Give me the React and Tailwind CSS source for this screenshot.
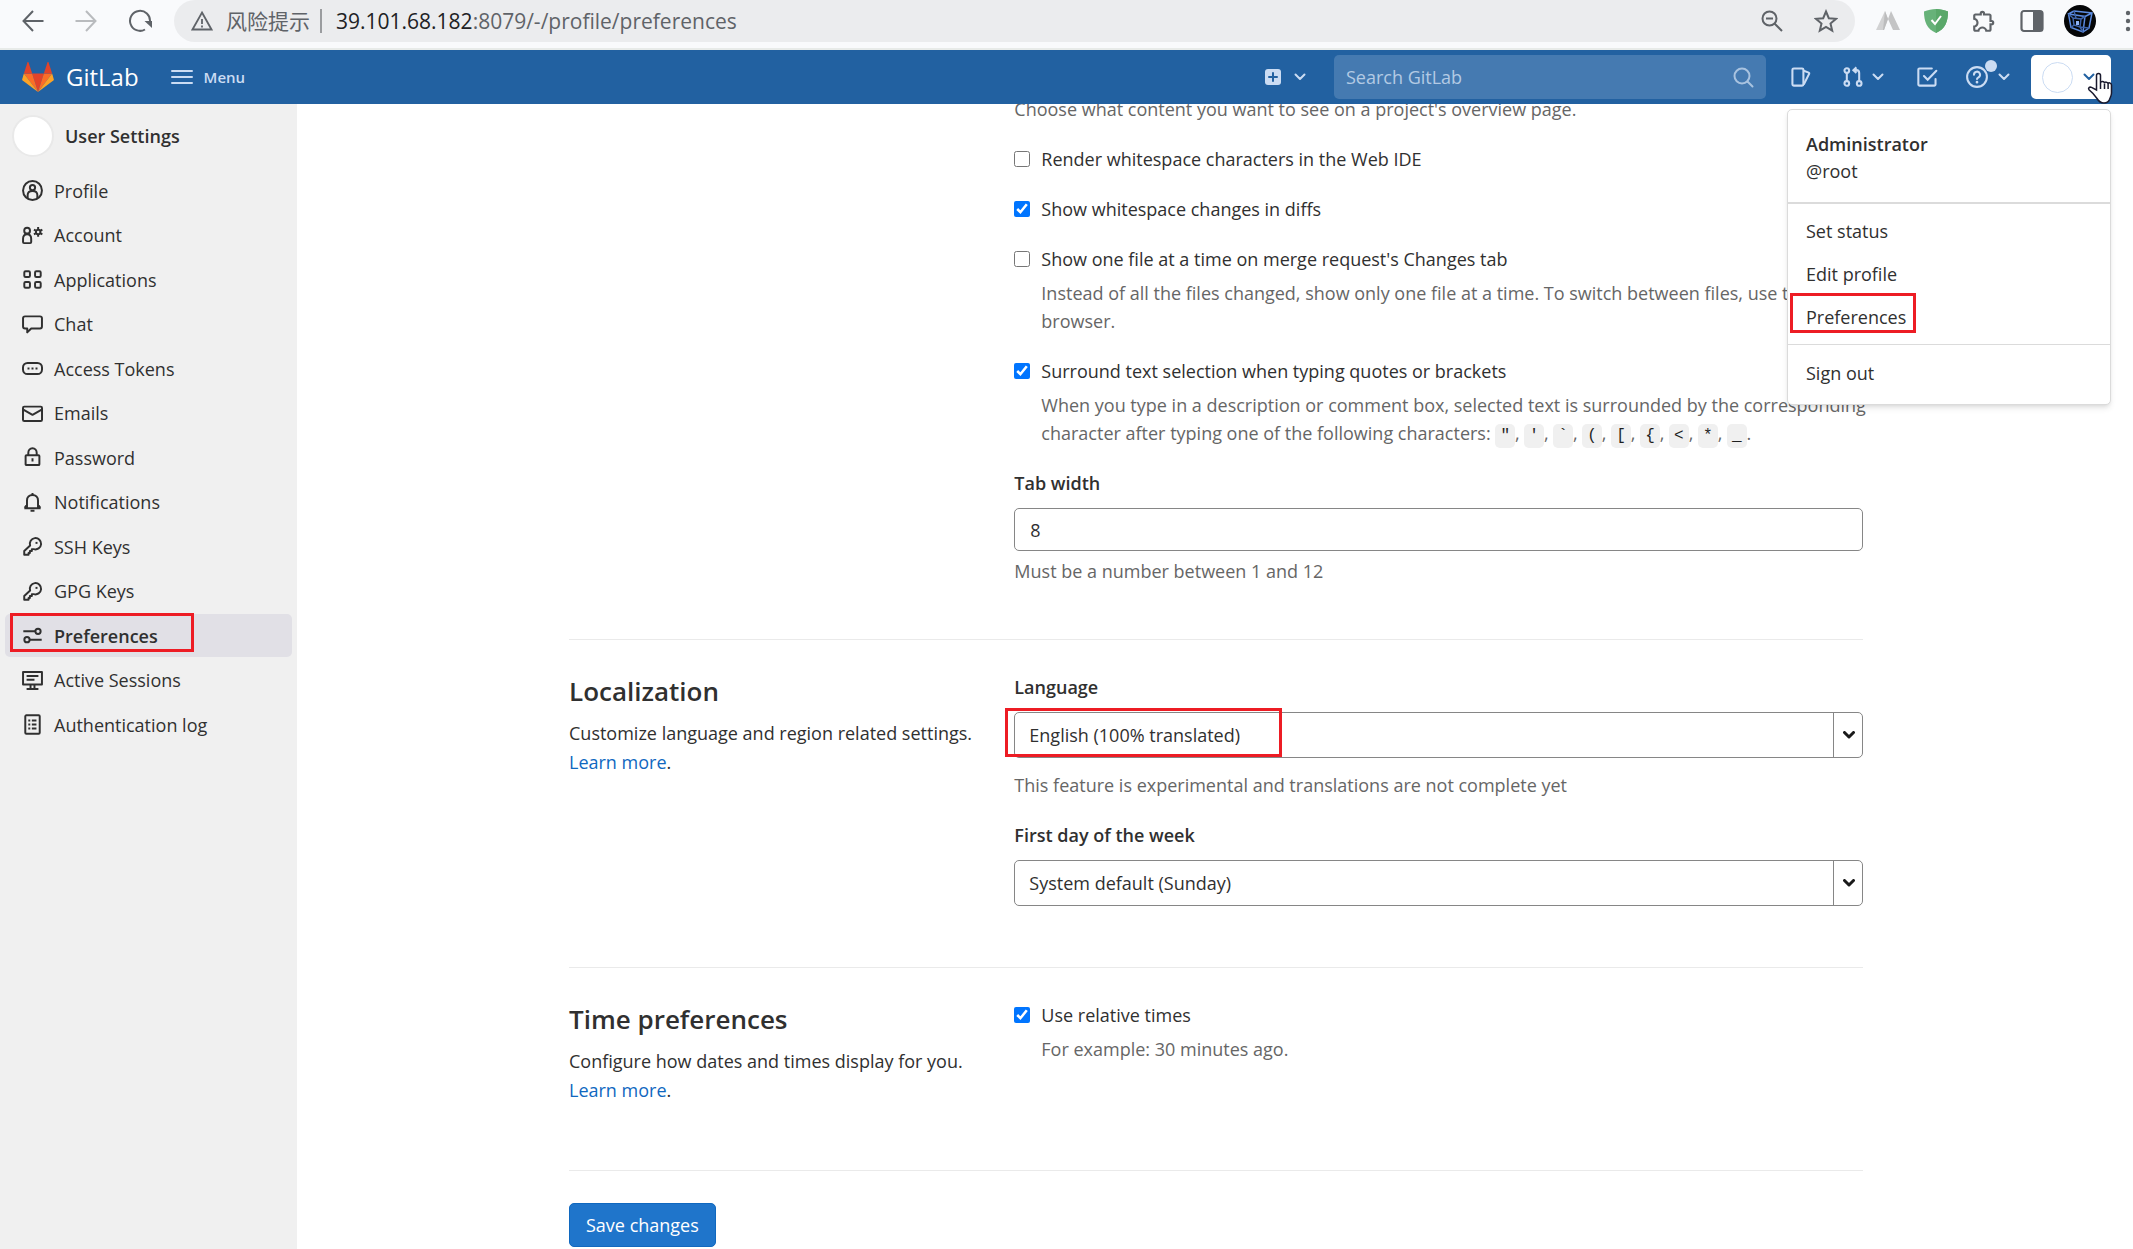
import { useState } from 'react';
import { MdOutlineExtension } from 'react-icons/md';

const SIDEBAR_ITEMS = [
  { icon: 'profile', label: 'Profile' },
  { icon: 'account', label: 'Account' },
  { icon: 'applications', label: 'Applications' },
  { icon: 'comment', label: 'Chat' },
  { icon: 'token', label: 'Access Tokens' },
  { icon: 'mail', label: 'Emails' },
  { icon: 'lock', label: 'Password' },
  { icon: 'bell', label: 'Notifications' },
  { icon: 'key', label: 'SSH Keys' },
  { icon: 'key', label: 'GPG Keys' },
  { icon: 'preferences', label: 'Preferences', active: true },
  { icon: 'monitor', label: 'Active Sessions' },
  { icon: 'log', label: 'Authentication log' },
];

const SURROUND_CHARS = ['"', "'", '`', '(', '[', '{', '<', '*', '_'];

export default function App() {
  return (
    <div className="min-h-screen flex flex-col overflow-hidden bg-white text-[18px] leading-7 text-[#303030] font-['Open_Sans','Noto_Sans_CJK_SC',sans-serif]">
      <BrowserBar />
      <Navbar />
      <div className="flex flex-1">
        <Sidebar />
        <Preferences />
      </div>
    </div>
  );
}

function BrowserBar() {
  return (
    <div className="h-[50px] flex items-start bg-[#f9fafc] border-b-2 border-[#e8ebe9] text-[#5f6368] pl-[22px] pr-0.5">
      <div className="h-[42px] flex items-center gap-[31px] pr-[22px] shrink-0">
        <button aria-label="Back">
          <svg className="size-[22px]" viewBox="0 0 22 22" fill="none" stroke="currentColor" strokeWidth="2">
            <path d="M21.500 11H1.500M11 1L1.500 11l9.500 10" />
          </svg>
        </button>
        <button aria-label="Forward" className="text-[#b9bbbe]">
          <svg className="size-[22px]" viewBox="0 0 22 22" fill="none" stroke="currentColor" strokeWidth="2">
            <path d="M0.500 11h20M11 1l9.500 10L11 21" />
          </svg>
        </button>
        <button aria-label="Reload">
          <svg className="size-6" viewBox="0 0 24 24" fill="none" stroke="currentColor" strokeWidth="2">
            <path d="M17 20.500A10 10 0 1 1 22 12.500" />
            <path d="M16.500 12H24v7z" fill="currentColor" stroke="none" />
          </svg>
        </button>
      </div>
      <div className="h-[42px] flex-1 flex items-center rounded-full bg-[#ebecee] pl-[17px] pr-[17px]">
        <svg className="size-[22px]" viewBox="0 0 22 22" fill="none" stroke="currentColor" strokeWidth="1.8">
          <path d="M11 2.500L20.500 19.500h-19z M11 9v5M11 15.500v2" />
        </svg>
        <span className="ml-[13px] text-[21px]">风险提示</span>
        <span className="w-0.5 h-6 ml-2.5 mr-3.5 bg-[#9a9c9f]" />
        <span className="flex-1 text-[21px]">
          <span className="text-[#202124]">39.101.68.182</span>:8079/-/profile/preferences
        </span>
        <div className="flex items-center gap-[31px]">
          <button aria-label="Zoom">
            <svg className="size-[22px]" viewBox="0 0 22 22" fill="none" stroke="currentColor" strokeWidth="2">
              <circle cx="8.500" cy="8.500" r="7" />
              <path d="M13.500 13.500l7.500 7.500M5 8.500h7" />
            </svg>
          </button>
          <button aria-label="Bookmark this page">
            <svg className="size-6" viewBox="0 0 24 24" fill="none" stroke="currentColor" strokeWidth="2">
              <path d="M12 2.500l2.800 6.700 7.200.6-5.500 4.700 1.700 7.100L12 17.800l-6.200 3.800 1.700-7.100L2 9.800l7.200-.6z" />
            </svg>
          </button>
        </div>
      </div>
      <div className="h-[42px] flex items-center gap-6 pl-[21px] shrink-0">
        <svg className="size-6" viewBox="0 0 24 24">
          <path d="M0 21L9 2l3 8-4 11z" fill="#d2d2d3" />
          <path d="M12 10l3-8 9 19h-7z" fill="#c4c4c5" />
          <path d="M9 2l3 8-4 11h-1z" fill="#bcbcbd" />
        </svg>
        <svg className="size-6" viewBox="0 0 24 24">
          <path d="M12 0c4 .2 8 1 12 2.500C24 13 21 20 12 24 3 20 0 13 0 2.500 4 1 8 .2 12 0z" fill="#67b279" />
          <path d="M12 0c4 .2 8 1 12 2.500C24 13 21 20 12 24z" fill="#5aa86a" />
          <path d="M7.500 11l3.500 4 6-8" fill="none" stroke="#fff" strokeWidth="2" />
        </svg>
        <MdOutlineExtension className="size-[26px] -mx-px" />
        <svg className="size-6" viewBox="0 0 24 24">
          <rect x="1.500" y="2" width="21" height="20" rx="2.500" fill="none" stroke="currentColor" strokeWidth="2.200" />
          <path d="M13 2h8a2 2 0 0 1 2 2v16a2 2 0 0 1-2 2h-8z" fill="currentColor" />
        </svg>
        <svg className="size-8 -mx-1" viewBox="0 0 32 32">
          <circle cx="16" cy="16" r="16" fill="#050608" />
          <g fill="none" stroke="#5b8be0" strokeWidth="1.500">
            <path d="M4.500 9L21 11.500 19 27 7 22.500zM10 6l18 2-3 15-6 4M4.500 9L10 6M21 11.500L28 8" />
            <path d="M9 13l8 1-1 8-6-2zM4.500 9L9 13M21 11.500L17 14M19 27l-3-5M7 22.500l3-2.500M10 6l2 7M25 23l-9-1" stroke="#3d62a8" />
          </g>
          <path d="M12 16h3v4h-3z" fill="#8db2f5" />
        </svg>
        <svg className="w-1.5 h-6 ml-[9px]" viewBox="0 0 6 24" fill="currentColor">
          <circle cx="3" cy="4" r="2.200" />
          <circle cx="3" cy="12" r="2.200" />
          <circle cx="3" cy="20" r="2.200" />
        </svg>
      </div>
    </div>
  );
}

function Navbar() {
  return (
    <header className="relative z-10 h-[54px] flex items-center bg-[#2261a1] text-[#cbdcf3] pl-[22px] pr-[22px]">
      <a href="#" className="flex items-center gap-3 text-white">
        <TanukiLogo />
        <span className="text-[24px]">GitLab</span>
      </a>
      <button className="flex items-center gap-[11px] ml-8 text-[15px] font-semibold">
        <svg className="w-[22px] h-4" viewBox="0 0 22 16" fill="none" stroke="currentColor" strokeWidth="2" strokeLinecap="round">
          <path d="M1 2h20M1 8h20M1 14h20" />
        </svg>
        Menu
      </button>
      <div className="flex-1" />
      <button aria-label="Create new" className="flex items-center gap-3 mr-7">
        <svg className="size-[18px]" viewBox="0 0 18 18">
          <rect x="1" y="1" width="16" height="16" rx="3" fill="currentColor" />
          <path d="M9 5v8M5 9h8" stroke="#2261a1" strokeWidth="2" strokeLinecap="round" />
        </svg>
        <Chevron />
      </button>
      <div className="w-[432px] h-11 flex items-center rounded-[5px] bg-[#457ab1] pl-3 pr-3">
        <input
          type="text"
          placeholder="Search GitLab"
          aria-label="Search GitLab"
          className="flex-1 bg-transparent outline-none text-white placeholder:text-[#b3cae4]"
        />
        <svg className="size-[21px] text-[#a9c3e0]" viewBox="0 0 21 21" fill="none" stroke="currentColor" strokeWidth="2" strokeLinecap="round">
          <circle cx="9" cy="9" r="7.500" />
          <path d="M14.500 14.500l5 5" />
        </svg>
      </div>
      <button aria-label="Issues" className="ml-6">
        <svg className="size-[22px]" viewBox="0 0 16 16" fill="none" stroke="currentColor" strokeWidth="1.500" strokeLinejoin="round">
          <rect x="1.750" y="1.750" width="8" height="12.500" rx="1" />
          <path d="M10 3.500l3.600 1.300a.6.6 0 0 1 .3.900L10 13.500" />
        </svg>
      </button>
      <button aria-label="Merge requests" className="flex items-center gap-2 ml-[30px]">
        <svg className="size-[22px]" viewBox="0 0 16 16" fill="none" stroke="currentColor" strokeWidth="1.500">
          <circle cx="3.500" cy="3.300" r="1.700" />
          <circle cx="3.500" cy="12.700" r="1.700" />
          <circle cx="12.500" cy="12.700" r="1.700" />
          <path d="M3.500 5v6M12.500 11V5a2 2 0 0 0-2-2H8.500M10.500 1L8.300 3l2.200 2" />
        </svg>
        <Chevron />
      </button>
      <button aria-label="To-Do List" className="ml-8">
        <svg className="size-[22px]" viewBox="0 0 16 16" fill="none" stroke="currentColor" strokeWidth="1.500" strokeLinecap="round">
          <path d="M11.500 1.750h-9a.8.800 0 0 0-.8.800v10.900a.8.800 0 0 0 .8.800h10.900a.8.800 0 0 0 .8-.800V9.500M5.800 7.300l2.700 2.700 6.300-6.500" />
        </svg>
      </button>
      <button aria-label="Help" className="relative flex items-center gap-2.5 ml-7">
        <svg className="size-[22px]" viewBox="0 0 16 16" fill="none" stroke="currentColor" strokeWidth="1.500" strokeLinecap="round">
          <circle cx="8" cy="8" r="7.200" />
          <path d="M5.800 6.300a2.200 2.200 0 1 1 3.300 1.900c-.7.400-1.100.7-1.100 1.300" />
          <circle cx="8" cy="11.800" r=".5" fill="currentColor" strokeWidth="1" />
        </svg>
        <span className="absolute -top-1.5 left-[19px] size-3 rounded-full bg-[#cbdcf3]" />
        <Chevron />
      </button>
      <div className="relative ml-[21px]">
        <button aria-label="User menu" className="h-11 w-20 flex items-center gap-2.5 rounded-[5px] bg-white pl-[11px] text-[#2261a1]">
          <span className="size-[31px] rounded-full border border-[#cbdcf3] bg-white" />
          <Chevron />
        </button>
        <HandCursor />
        <UserMenu />
      </div>
    </header>
  );
}

function UserMenu() {
  return (
    <div className="absolute right-0 top-[54px] w-[324px] bg-white border border-[#dbdbdb] rounded-[5px] shadow-md text-[#303030] pt-[21px] pb-[10px]">
      <div className="px-[18px] leading-[27px]">
        <div className="font-semibold">Administrator</div>
        <div>@root</div>
      </div>
      <hr className="mt-[17px] mb-[5px] border-t-2 border-[#dbdbdb]" />
      <MenuLink label="Set status" />
      <MenuLink label="Edit profile" />
      <MenuLink label="Preferences" marked />
      <hr className="my-[6px] border-[#dbdbdb]" />
      <MenuLink label="Sign out" />
    </div>
  );
}

function MenuLink({ label, marked }) {
  return (
    <a href="#" className="relative h-[43px] flex items-center px-[18px]">
      {label}
      {marked && <span className="absolute left-0.5 -top-0.5 w-[126px] h-10 border-3 border-[#ed1c24]" />}
    </a>
  );
}

function Sidebar() {
  return (
    <aside className="w-[297px] shrink-0 bg-[#f0f0f0] pt-[11px]">
      <div className="flex items-center gap-[11px] pl-3">
        <span className="size-[42px] rounded-full bg-white border-2 border-[#e9e9e9]" />
        <span className="font-semibold">User Settings</span>
      </div>
      <ul className="mt-3 px-[5px] h-[577px] flex flex-col justify-between">
        {SIDEBAR_ITEMS.map((item) => (
          <li key={item.label} className="relative">
            <a
              href="#"
              className={`h-[43px] flex items-center gap-[11px] pl-[17px] rounded-[5px] ${
                item.active ? 'bg-[#e1e0e6] font-semibold' : ''
              }`}
            >
              <SidebarIcon name={item.icon} />
              {item.label}
            </a>
            {item.active && (
              <span className="absolute left-[5px] -top-px w-[184px] h-[39px] border-3 border-[#ed1c24]" />
            )}
          </li>
        ))}
      </ul>
    </aside>
  );
}

function Preferences() {
  return (
    <main className="flex-1 -mt-[9px] pl-[42px] pr-10">
      <form className="max-w-[1294px] mx-auto" onSubmit={(e) => e.preventDefault()}>
        <div className="grid grid-cols-3 gap-[42px] pb-[54px]">
          <div />
          <div className="col-span-2 flex flex-col gap-[22px]">
            <p className="text-[#666]">Choose what content you want to see on a project's overview page.</p>
            <Checkbox id="whitespace-ide" label="Render whitespace characters in the Web IDE" />
            <Checkbox id="whitespace-diffs" label="Show whitespace changes in diffs" checked />
            <Checkbox id="one-file" label="Show one file at a time on merge request's Changes tab">
              Instead of all the files changed, show only one file at a time. To switch between files, use the file
              <br />
              browser.
            </Checkbox>
            <Checkbox id="surround" label="Surround text selection when typing quotes or brackets" checked>
              When you type in a description or comment box, selected text is surrounded by the corresponding
              <br />
              character after typing one of the following characters:{' '}
              {SURROUND_CHARS.map((char, i) => (
                <span key={char}>
                  <code className="px-[5px] py-[3px] rounded-[5px] bg-[#f0f0f0] text-[16px] leading-none text-[#1f1f1f] font-['Liberation_Mono',monospace]">
                    {char}
                  </code>
                  {i < SURROUND_CHARS.length - 1 ? ', ' : '.'}
                </span>
              ))}
            </Checkbox>
            <div>
              <label htmlFor="tab-width" className="block mb-[11px] font-semibold">Tab width</label>
              <input
                id="tab-width"
                type="text"
                defaultValue="8"
                className="block w-full h-[43px] px-[15px] rounded-[5px] border border-[#868686] bg-white"
              />
              <p className="mt-1.5 text-[#666]">Must be a number between 1 and 12</p>
            </div>
          </div>
        </div>

        <Section title="Localization" desc="Customize language and region related settings.">
          <div className="flex flex-col gap-[22px]">
            <div>
              <Select id="language" label="Language" value="English (100% translated)" marked />
              <p className="mt-[13px] text-[#666]">This feature is experimental and translations are not complete yet</p>
            </div>
            <Select id="first-day" label="First day of the week" value="System default (Sunday)" />
          </div>
        </Section>

        <Section title="Time preferences" desc="Configure how dates and times display for you.">
          <Checkbox id="relative-times" label="Use relative times" checked>
            For example: 30 minutes ago.
          </Checkbox>
        </Section>

        <div className="border-t border-[#eaeaea] pt-8 pb-0.5">
          <button className="h-11 px-4 rounded-[5px] bg-[#1f75cb] border border-[#1068bf] text-white">Save changes</button>
        </div>
      </form>
    </main>
  );
}

function Section({ title, desc, children }) {
  return (
    <section className="grid grid-cols-3 gap-[42px] border-t border-[#eaeaea] pt-[33px] pb-[61px]">
      <div className="pt-0.5 pb-1">
        <h4 className="mb-3 text-[26px] leading-8 font-semibold">{title}</h4>
        <p className="leading-[29px] whitespace-nowrap">
          {desc}
          <br />
          <a href="#" className="text-[#1068bf]">Learn more</a>.
        </p>
      </div>
      <div className="col-span-2">{children}</div>
    </section>
  );
}

function Checkbox({ id, label, checked = false, children }) {
  const [on, setOn] = useState(checked);

  return (
    <div className="flex gap-[11px]">
      <input
        id={id}
        type="checkbox"
        checked={on}
        onChange={() => setOn(!on)}
        className="size-4 mt-1.5 shrink-0"
      />
      <div className="min-w-0">
        <label htmlFor={id} className="block">{label}</label>
        {children && <p className="mt-1.5 text-[#666] whitespace-nowrap">{children}</p>}
      </div>
    </div>
  );
}

function Select({ id, label, value, marked }) {
  return (
    <div>
      <label htmlFor={id} className="block mb-[11px] font-semibold">{label}</label>
      <div className="relative">
        <select
          id={id}
          className="block w-full h-[46px] pl-[14px] rounded-[5px] border border-[#868686] bg-white appearance-none"
        >
          <option>{value}</option>
        </select>
        <span className="absolute right-0 inset-y-0 w-[30px] flex items-center justify-center border-l border-[#868686] pointer-events-none">
          <svg className="w-3 h-2" viewBox="0 0 12 8" fill="none" stroke="#1a1a1a" strokeWidth="3" strokeLinecap="round" strokeLinejoin="round">
            <path d="M1.500 1.500L6 6l4.500-4.500" />
          </svg>
        </span>
        {marked && (
          <span className="absolute -left-[9px] -top-1 w-[277px] h-[49px] border-3 border-[#ed1c24] pointer-events-none" />
        )}
      </div>
    </div>
  );
}

function Chevron() {
  return (
    <svg className="w-3 h-2 shrink-0" viewBox="0 0 12 8" fill="none" stroke="currentColor" strokeWidth="2" strokeLinecap="round" strokeLinejoin="round">
      <path d="M1.500 1.500L6 6l4.500-4.500" />
    </svg>
  );
}

function TanukiLogo() {
  return (
    <svg className="w-8 h-[30px]" viewBox="0 0 36 34">
      <path d="M18 34L24.600 13.100H11.400z" fill="#e24329" />
      <path d="M18 34L11.400 13.100H2z" fill="#fc6d26" />
      <path d="M2 13.100L.1 19.500a1.400 1.400 0 0 0 .5 1.500L18 34z" fill="#fca326" />
      <path d="M2 13.100h9.400L7.300.500c-.2-.6-1.100-.6-1.300 0z" fill="#e24329" />
      <path d="M18 34l6.600-20.900H34z" fill="#fc6d26" />
      <path d="M34 13.100l1.900 6.400a1.400 1.400 0 0 1-.5 1.500L18 34z" fill="#fca326" />
      <path d="M34 13.100h-9.400L28.700.500c.2-.6 1.100-.6 1.300 0z" fill="#e24329" />
    </svg>
  );
}

function HandCursor() {
  return (
    <svg className="absolute z-10 -right-0.5 top-[17px] w-[26px] h-8 pointer-events-none" viewBox="0 0 26 32">
      <path
        d="M9.500 18V3.500a2 2 0 0 1 4 0V11c0-2 4-1.800 4 .300 0-1.800 3.600-1.500 3.600.6 0-1.700 3.400-1.300 3.400 1V21c0 3-1.500 4.500-2 6.500-1 2.500-3 3.500-5.500 3.500-4 0-5.500-2-7-4.500L6 21.500l-4-3.800c-1.200-1.500.5-3.200 2.500-2.300z"
        fill="#fff"
        stroke="#1a1a2e"
        strokeWidth="1.500"
      />
      <path d="M13.500 11v6M17.500 11.500V17M21.100 12v5" stroke="#1a1a2e" strokeWidth="1.500" />
    </svg>
  );
}

function SidebarIcon({ name }) {
  return (
    <svg
      className="size-[21px] shrink-0"
      viewBox="0 0 16 16"
      fill="none"
      stroke="currentColor"
      strokeWidth="1.500"
      strokeLinejoin="round"
    >
      {name === 'profile' && (
        <>
          <circle cx="8" cy="8" r="7.200" />
          <circle cx="8" cy="5.800" r="2" />
          <path d="M4.300 13.800v-2.300c0-2 1.500-3.200 3.700-3.200s3.700 1.200 3.700 3.200v2.300" />
        </>
      )}
      {name === 'account' && (
        <>
          <circle cx="3.900" cy="4.300" r="2.200" />
          <path d="M.8 13v-2.500C.8 8.300 2 7 3.900 7S7 8.300 7 10.500V13c0 .5-.3.800-.8.800H1.600c-.5 0-.8-.3-.8-.800z" />
          <circle cx="12.300" cy="5.300" r="1.700" />
          <path d="M12.300 1.600v1.600M12.300 7.400V9M9.100 3.500l1.400.8M14.100 6.300l1.400.8M9.100 7.100l1.400-.8M14.100 4.300l1.400-.8" />
        </>
      )}
      {name === 'applications' && (
        <>
          <rect x="1.750" y="1.750" width="4.300" height="4.300" rx="1" />
          <rect x="9.950" y="1.750" width="4.300" height="4.300" rx="1" />
          <rect x="1.750" y="9.950" width="4.300" height="4.300" rx="1" />
          <rect x="9.950" y="9.950" width="4.300" height="4.300" rx="1" />
        </>
      )}
      {name === 'comment' && (
        <path d="M2.300 1.800h11.400c.9 0 1.500.6 1.500 1.500v6.200c0 .9-.6 1.500-1.500 1.500H7l-3 3V11H2.300C1.400 11 .8 10.400.8 9.500V3.300c0-.9.6-1.500 1.500-1.500z" />
      )}
      {name === 'token' && (
        <>
          <rect x=".75" y="3.750" width="14.500" height="8.500" rx="3.500" />
          <path d="M4.200 8h1.500M7.250 8h1.500M10.300 8h1.500" />
        </>
      )}
      {name === 'mail' && (
        <>
          <rect x=".75" y="2.750" width="14.500" height="11" rx="1" />
          <path d="M1 5l7 4 7-4" />
        </>
      )}
      {name === 'lock' && (
        <>
          <rect x="2.750" y="6.250" width="10.500" height="7.500" rx=".7" />
          <path d="M4.800 6V4.500C4.800 2.600 6 1 8 1s3.200 1.600 3.200 3.500V6M8 8.500V11" />
        </>
      )}
      {name === 'bell' && (
        <>
          <path d="M3.800 12V6.500c0-2.500 1.700-4.200 4.200-4.200s4.200 1.700 4.200 4.200V12M1.800 12.300h12.400M2 12l2-2.500M14 12l-2-2.500" />
          <path d="M8 .8v1.500M6.500 14.300h3" />
        </>
      )}
      {name === 'key' && (
        <>
          <path d="M6.200 7.300A4.300 4.300 0 1 1 9 10H7.500v1.500H6V13H5v1.300H1.700v-2.800z" />
          <path d="M10.300 4.500h1.500v1.500h-1.500z" fill="currentColor" stroke="none" />
        </>
      )}
      {name === 'preferences' && (
        <>
          <circle cx="12.200" cy="4.800" r="2" />
          <circle cx="3.800" cy="11.200" r="2" />
          <path d="M1 4.800h9.200M5.800 11.200H15" />
        </>
      )}
      {name === 'monitor' && (
        <path d="M.8 1.500h14.400v9.500H.8zM3.500 4.500h9M3.500 7.500h6M6.500 11v3M9.500 11v3M3.500 14.500h9" />
      )}
      {name === 'log' && (
        <>
          <rect x="2.500" y="1" width="11" height="14" rx=".8" />
          <path d="M4.800 5h1.500M7.500 5H11M4.800 8h1.500M7.500 8H11M4.800 11h1.500M7.500 11H11" />
        </>
      )}
    </svg>
  );
}
